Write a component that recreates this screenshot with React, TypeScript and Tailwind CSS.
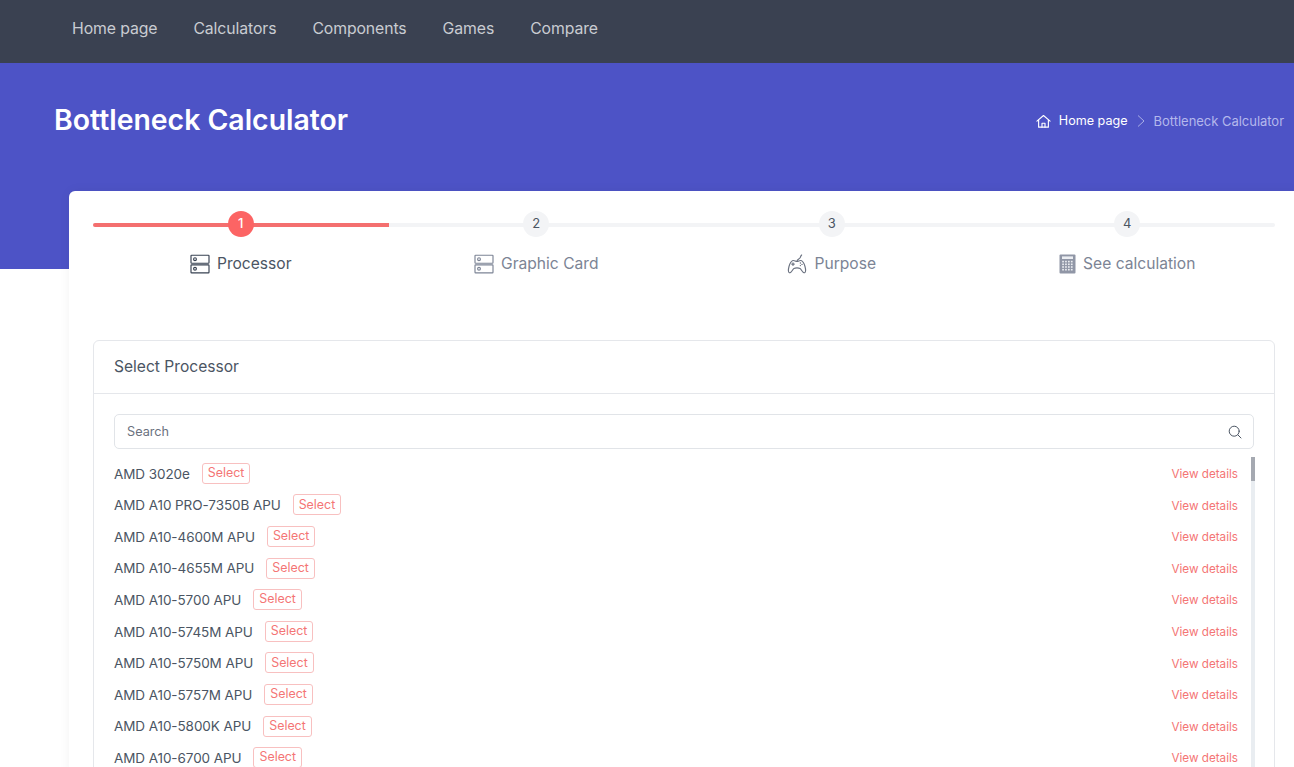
import React from "react";

const font = { fontFamily: "Inter, 'Liberation Sans', sans-serif" };

function ServerIcon({ className }: { className: string }) {
  return (
    <svg viewBox="0 0 20 20" fill="none" stroke="currentColor" strokeWidth="1.15" className={className}>
      <rect x="1" y="1.2" width="18" height="8" rx="0.6" />
      <rect x="1" y="10.8" width="18" height="8" rx="0.6" />
      <circle cx="5" cy="5.2" r="1.4" />
      <circle cx="5" cy="14.8" r="1.4" />
    </svg>
  );
}

function PadIcon({ className }: { className: string }) {
  return (
    <svg viewBox="0 0 20 20" fill="none" stroke="currentColor" strokeWidth="1.15" strokeLinejoin="round" strokeLinecap="round" className={className}>
      <path d="M6 6.5 C4 7 3 9 2 12.5 C1.2 15.5 1 18.5 2.6 18.8 C4.4 19 5.4 15.6 7 14.4 C8.4 13.6 11.6 13.6 13 14.4 C14.6 15.6 15.6 19 17.4 18.8 C19 18.5 18.8 15.5 18 12.5 C17 9 16 7 14 6.5 C12.4 6.2 11.6 7.4 10 7.4 C8.4 7.4 7.6 6.2 6 6.5 Z" />
      <path d="M10 7.4 C10 5 12.6 5.2 13.2 3.6 C13.5 2.6 13.8 1.8 14.6 1" />
      <path d="M6 8.8v2.6M4.7 10.1h2.6" />
      <path d="M13.4 9h.01M15 10.4h.01M13.4 11.6h.01" strokeWidth="1.4" />
    </svg>
  );
}

function CalcIcon({ className }: { className: string }) {
  const cells: React.ReactNode[] = [];
  [6.8, 9.5, 12.2, 14.9].forEach((y) =>
    [3.2, 6.1, 9, 11.9].forEach((x) =>
      cells.push(<rect key={`${x}-${y}`} x={x} y={y} width="1.7" height="1.6" fill="#eceef2" />)
    )
  );
  return (
    <svg viewBox="0 0 17 20" className={className}>
      <rect x="0.5" y="0.5" width="16" height="19" rx="1" fill="currentColor" />
      <rect x="3" y="2.4" width="11" height="2.6" fill="#eceef2" />
      {cells}
    </svg>
  );
}

function HomeIcon({ className }: { className: string }) {
  return (
    <svg viewBox="0 0 16 16" fill="none" stroke="currentColor" strokeWidth="1.2" strokeLinejoin="round" strokeLinecap="round" className={className}>
      <path d="M1 7.6 8 1.6l7 6" />
      <path d="M2.8 6.4V14h10.4V6.4" />
      <path d="M6.4 14V9.8h3.2V14" />
    </svg>
  );
}

const rows: string[] = [
  "AMD 3020e",
  "AMD A10 PRO-7350B APU",
  "AMD A10-4600M APU",
  "AMD A10-4655M APU",
  "AMD A10-5700 APU",
  "AMD A10-5745M APU",
  "AMD A10-5750M APU",
  "AMD A10-5757M APU",
  "AMD A10-5800K APU",
  "AMD A10-6700 APU",
];

const steps = [
  { n: "1", label: "Processor", icon: "server", active: true },
  { n: "2", label: "Graphic Card", icon: "server", active: false },
  { n: "3", label: "Purpose", icon: "pad", active: false },
  { n: "4", label: "See calculation", icon: "calc", active: false },
];

export default function App() {
  return (
    <div className="h-screen overflow-hidden bg-white" style={font}>
      <nav className="h-[63px] bg-[#3a4151] flex items-center pl-[72px] pb-[6px] gap-9 text-[15.8px] text-[#c9ccd2] tracking-[-0.1px]">
        <span>Home page</span>
        <span>Calculators</span>
        <span>Components</span>
        <span>Games</span>
        <span>Compare</span>
      </nav>

      <header className="h-[206px] bg-[#4d53c6] flex items-start justify-between pl-[54px] pr-[10px]">
        <h1 className="mt-[39px] text-[28.4px] leading-[36px] font-semibold text-white">Bottleneck Calculator</h1>
        <div className="mt-[50px] flex items-center text-[12.6px] leading-[16px]">
          <HomeIcon className="w-[15px] h-[15px] text-white mr-[8px]" />
          <span className="text-white">Home page</span>
          <svg viewBox="0 0 10 14" fill="none" stroke="#a9aee6" strokeWidth="1" className="w-[10px] h-[14px] mx-[8px]">
            <path d="M2 1.5 8 7l-6 5.5" />
          </svg>
          <span className="text-[#b4b8ec] text-[13px] tracking-[-0.03px]">Bottleneck Calculator</span>
        </div>
      </header>

      <main className="relative -mt-[78px] ml-[69px] -mr-[5px] bg-white rounded-t-md pl-6 pr-6 pt-[20px] shadow-[0_0_12px_rgba(0,0,0,0.05)]">
        <div className="relative grid grid-cols-4">
          <div className="absolute left-0 right-0 top-[12px] h-1 rounded-full bg-[#f3f4f6]" />
          <div className="absolute left-0 w-1/4 top-[12px] h-1 rounded-l-full bg-[#f46f6f]" />
          {steps.map((s) => (
            <div key={s.n} className="relative flex flex-col items-center">
              <div className={`w-[26px] h-[26px] rounded-full flex items-center justify-center text-[13px] ${s.active ? "bg-[#fc6464] text-white font-medium" : "bg-[#f3f4f6] text-[#4b5563]"}`}>
                {s.n}
              </div>
              <div className={`mt-[16px] h-[22px] flex items-center gap-[7px] text-[15.6px] ${s.active ? "text-[#4b5563]" : "text-[#7c8495]"}`}>
                {s.icon === "server" && <ServerIcon className={`w-5 h-5 ${s.active ? "text-[#374151]" : "text-[#7c8495]"}`} />}
                {s.icon === "pad" && <PadIcon className="w-5 h-5 text-[#6b7280]" />}
                {s.icon === "calc" && <CalcIcon className="w-[17px] h-5 text-[#9096a6]" />}
                <span>{s.label}</span>
              </div>
            </div>
          ))}
        </div>

        <section className="mt-[65px] border border-[#e5e7eb] rounded-md">
          <div className="h-[53px] border-b border-[#e5e7eb] flex items-center pl-5 text-[15.6px] text-[#4b5563]">
            Select Processor
          </div>
          <div className="pt-5 px-5">
            <div className="h-[35px] border border-[#e1e4e8] rounded-[5px] flex items-center justify-between pl-3 pr-[11px] text-[12.7px] text-[#6b7280]">
              <span className="mt-[1px]">Search</span>
              <svg viewBox="0 0 14 14" fill="none" stroke="#4b5563" strokeWidth="1" strokeLinecap="round" className="w-[14px] h-[14px]">
                <circle cx="6.2" cy="6.2" r="5" />
                <path d="m10 10 3 3" />
              </svg>
            </div>
            <div className="relative mt-[8px]">
              <div className="absolute right-[-1px] top-0 bottom-0 w-1 bg-[#e9edf1]">
                <div className="h-6 bg-[#a5a9b1]" />
              </div>
              <ul className="pt-[1px]">
                {rows.map((name) => (
                  <li key={name} className="h-[31.6px] flex items-center justify-between pr-4">
                    <div className="flex items-center gap-3">
                      <span className="text-[13.5px] text-[#4b5563] tracking-[-0.08px]">{name}</span>
                      <span className="h-[21px] px-[5px] -mt-[1px] border border-[#f8c0c0] rounded-[3px] flex items-center text-[12.4px] text-[#f47575]">Select</span>
                    </div>
                    <span className="mt-[2px] text-[11.7px] text-[#f47575]">View details</span>
                  </li>
                ))}
              </ul>
            </div>
          </div>
        </section>
      </main>
    </div>
  );
}
